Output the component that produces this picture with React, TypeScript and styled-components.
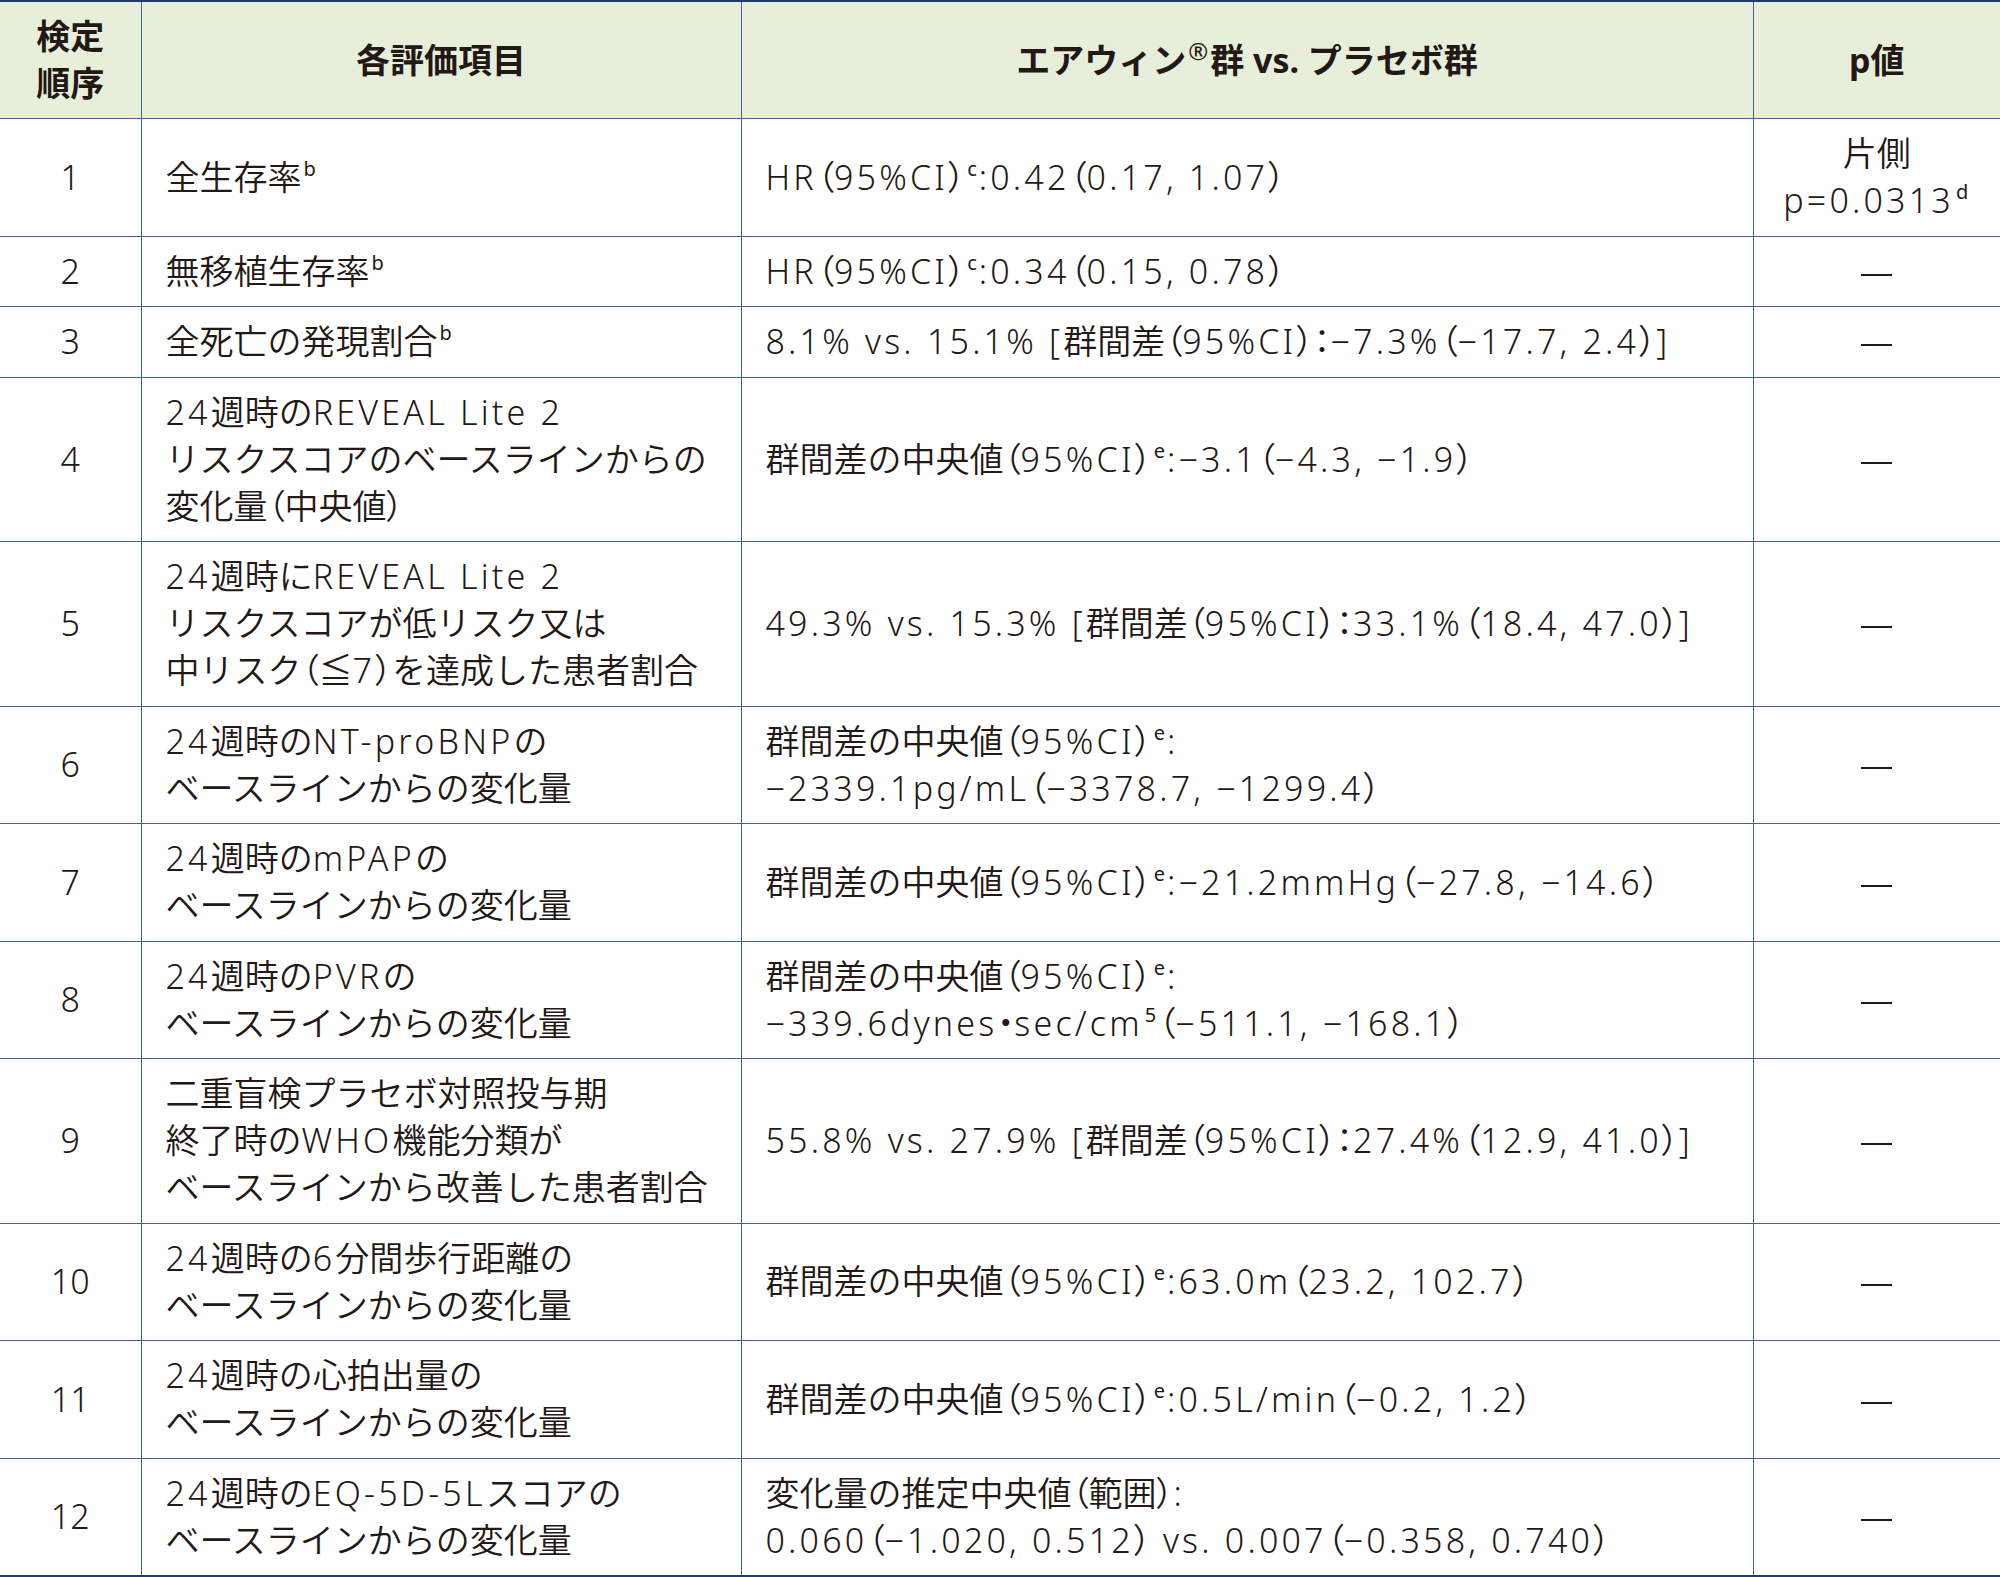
import React from "react";
import styled, { createGlobalStyle } from "styled-components";

const GlobalStyle = createGlobalStyle`
  html, body {
    margin: 0;
    padding: 0;
    background: #ffffff;
  }
  body {
    font-family: "Noto Sans", "Noto Sans CJK JP", sans-serif;
    color: #231815;
  }
`;

const Table = styled.table`
  width: 2000px;
  border-collapse: collapse;
  table-layout: fixed;
  font-family: "Noto Sans", "Noto Sans CJK JP", sans-serif;
  font-size: 34px;
  line-height: 47px;
  color: #231815;
  border-top: 2px solid #1f3d68;
  border-bottom: 2px solid #1f3d68;
`;

const HeadCell = styled.th`
  background: #e7efdb;
  font-weight: 700;
  text-align: center;
  vertical-align: middle;
  padding: 11px 12px;
  border: 1.5px solid #44638a;
  border-top: none;
  &:first-child {
    border-left: none;
  }
  &:last-child {
    border-right: none;
  }
`;

const Cell = styled.td<{ $align?: "left" | "center" }>`
  font-weight: 350;
  text-align: ${(p) => p.$align ?? "left"};
  vertical-align: middle;
  padding: 11.25px ${(p) => (p.$align === "center" ? "12px" : "24px")};
  border: 1.5px solid #44638a;
  white-space: nowrap;
  &:first-child {
    border-left: none;
  }
  &:last-child {
    border-right: none;
  }
`;

const Sup = styled.sup<{ $big?: boolean }>`
  font-size: ${(p) => (p.$big ? "24px" : "20px")};
  font-weight: 400;
  letter-spacing: 0;
  line-height: 0;
  vertical-align: ${(p) => (p.$big ? "13px" : "14px")};
  margin-left: 2px;
  margin-right: 2px;
`;

const Palt = styled.span`
  font-feature-settings: "palt";
`;

const Latin = styled.span`
  letter-spacing: 3.2px;
`;

const Dash = styled.span`
  display: inline-block;
  width: 31px;
  height: 2px;
  background: #231815;
  vertical-align: middle;
`;

/* mini markup: ^x^ superscript, | line break, full-width punctuation set proportionally */
function T({ s }: { s: string }) {
  const parts = s
    .split(/(\^[^^]+\^|\||[（）：・]|[\u0020-\u005D\u005F-\u007B\u007D\u007E\u2212]+)/)
    .filter((x) => x !== "");
  return (
    <>
      {parts.map((part, i) => {
        if (part === "|") return <br key={i} />;
        if (part.startsWith("^") && part.endsWith("^") && part.length > 2)
          return <Sup key={i}>{part.slice(1, -1)}</Sup>;
        if (/^[（）：・]$/.test(part)) return <Palt key={i}>{part}</Palt>;
        if (/^[\u0020-\u007E\u2212]+$/.test(part)) return <Latin key={i}>{part}</Latin>;
        return <React.Fragment key={i}>{part}</React.Fragment>;
      })}
    </>
  );
}

type Row = { no: string; item: string; result: string; p?: string };

const M = "\u2212";

const rows: Row[] = [
  {
    no: "1",
    item: "全生存率^b^",
    result: "HR（95%CI）^c^:0.42（0.17, 1.07）",
    p: "片側|p=0.0313^d^",
  },
  {
    no: "2",
    item: "無移植生存率^b^",
    result: "HR（95%CI）^c^:0.34（0.15, 0.78）",
  },
  {
    no: "3",
    item: "全死亡の発現割合^b^",
    result: `8.1% vs. 15.1% [群間差（95%CI）：${M}7.3%（${M}17.7, 2.4）]`,
  },
  {
    no: "4",
    item: "24週時のREVEAL Lite 2|リスクスコアのベースラインからの|変化量（中央値）",
    result: `群間差の中央値（95%CI）^e^:${M}3.1（${M}4.3, ${M}1.9）`,
  },
  {
    no: "5",
    item: "24週時にREVEAL Lite 2|リスクスコアが低リスク又は|中リスク（≦7）を達成した患者割合",
    result: "49.3% vs. 15.3% [群間差（95%CI）：33.1%（18.4, 47.0）]",
  },
  {
    no: "6",
    item: "24週時のNT-proBNPの|ベースラインからの変化量",
    result: `群間差の中央値（95%CI）^e^:|${M}2339.1pg/mL（${M}3378.7, ${M}1299.4）`,
  },
  {
    no: "7",
    item: "24週時のmPAPの|ベースラインからの変化量",
    result: `群間差の中央値（95%CI）^e^:${M}21.2mmHg（${M}27.8, ${M}14.6）`,
  },
  {
    no: "8",
    item: "24週時のPVRの|ベースラインからの変化量",
    result: `群間差の中央値（95%CI）^e^:|${M}339.6dynes・sec/cm^5^（${M}511.1, ${M}168.1）`,
  },
  {
    no: "9",
    item: "二重盲検プラセボ対照投与期|終了時のWHO機能分類が|ベースラインから改善した患者割合",
    result: "55.8% vs. 27.9% [群間差（95%CI）：27.4%（12.9, 41.0）]",
  },
  {
    no: "10",
    item: "24週時の6分間歩行距離の|ベースラインからの変化量",
    result: "群間差の中央値（95%CI）^e^:63.0m（23.2, 102.7）",
  },
  {
    no: "11",
    item: "24週時の心拍出量の|ベースラインからの変化量",
    result: `群間差の中央値（95%CI）^e^:0.5L/min（${M}0.2, 1.2）`,
  },
  {
    no: "12",
    item: "24週時のEQ-5D-5Lスコアの|ベースラインからの変化量",
    result: `変化量の推定中央値（範囲）:|0.060（${M}1.020, 0.512） vs. 0.007（${M}0.358, 0.740）`,
  },
];

export default function App() {
  return (
    <>
      <GlobalStyle />
      <Table>
        <colgroup>
          <col style={{ width: 141 }} />
          <col style={{ width: 600 }} />
          <col style={{ width: 1012 }} />
          <col style={{ width: 247 }} />
        </colgroup>
        <thead>
          <tr>
            <HeadCell>
              検定
              <br />
              順序
            </HeadCell>
            <HeadCell>各評価項目</HeadCell>
            <HeadCell>
              エアウィン<Sup $big>®</Sup>群 vs. プラセボ群
            </HeadCell>
            <HeadCell>p値</HeadCell>
          </tr>
        </thead>
        <tbody>
          {rows.map((r) => (
            <tr key={r.no}>
              <Cell $align="center">{r.no}</Cell>
              <Cell>
                <T s={r.item} />
              </Cell>
              <Cell>
                <T s={r.result} />
              </Cell>
              <Cell $align="center">{r.p ? <T s={r.p} /> : <Dash />}</Cell>
            </tr>
          ))}
        </tbody>
      </Table>
    </>
  );
}
